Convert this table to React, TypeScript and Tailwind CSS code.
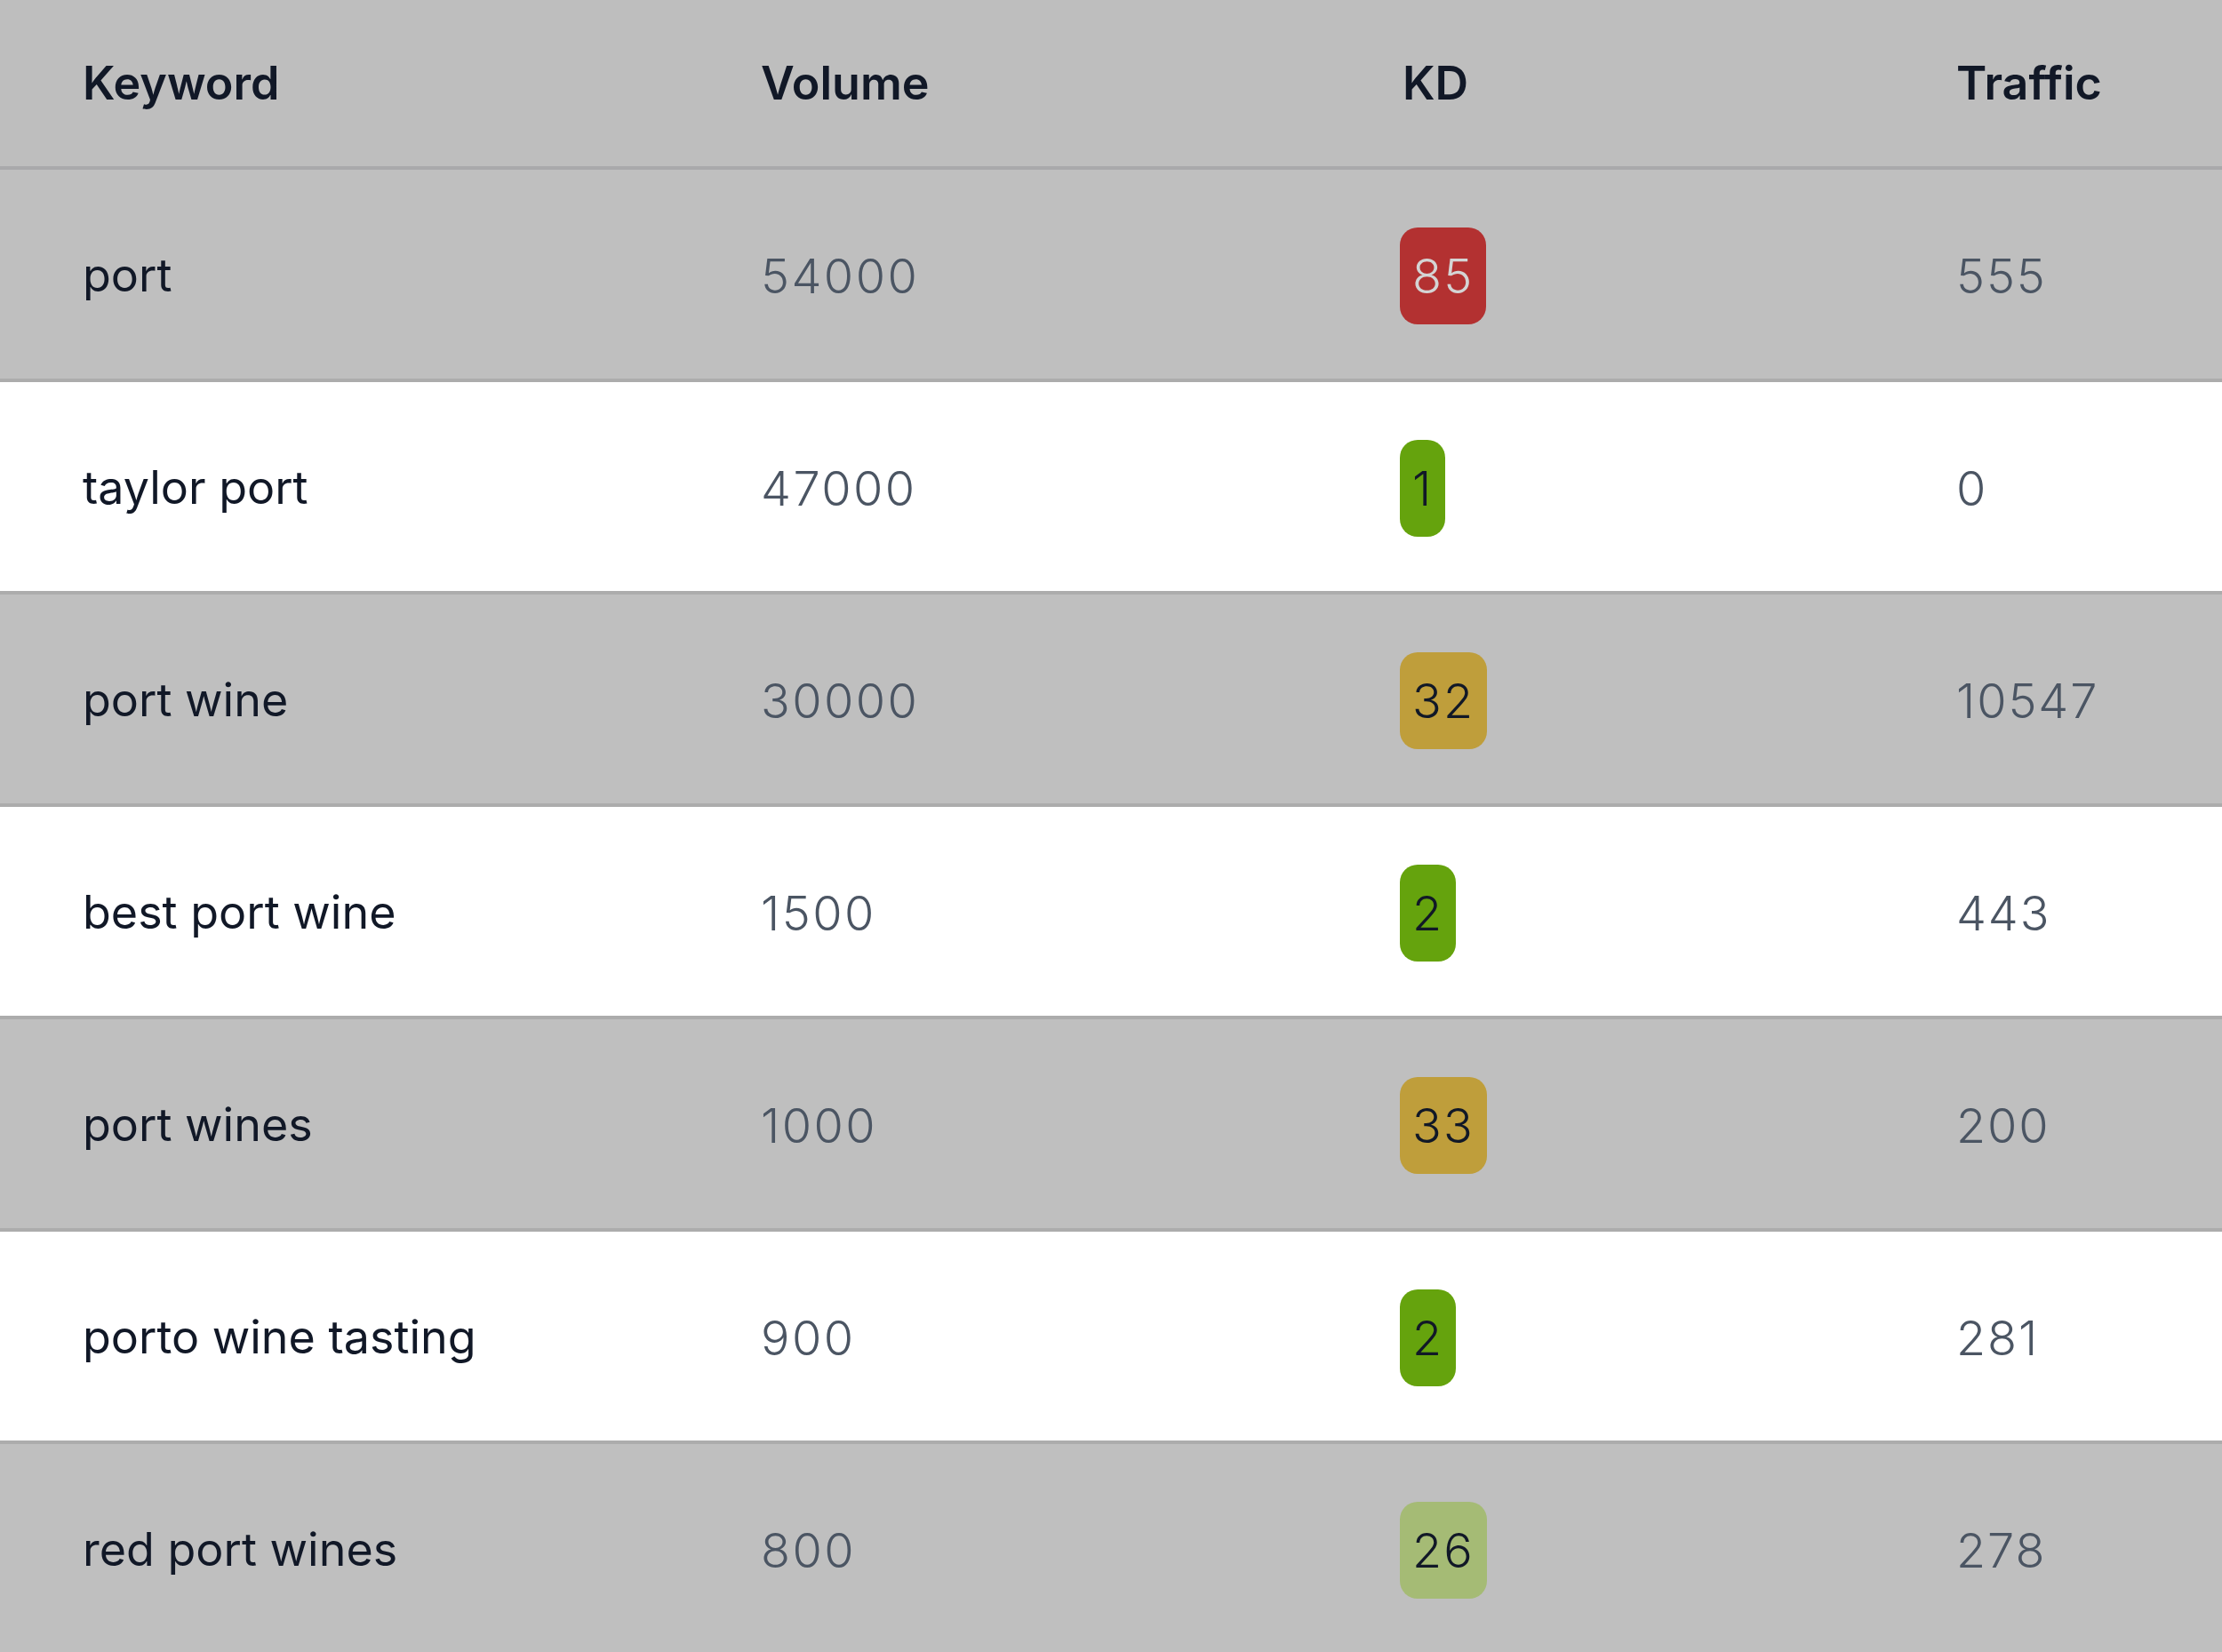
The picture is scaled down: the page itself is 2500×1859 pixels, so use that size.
const rows = [
  { kw: "port", vol: "54000", kd: "85", traffic: "555", badge: "bg-[#b33131] text-[#d4d4d4]" },
  { kw: "taylor port", vol: "47000", kd: "1", traffic: "0", badge: "bg-[#65a30d] text-[#111827]" },
  { kw: "port wine", vol: "30000", kd: "32", traffic: "10547", badge: "bg-[#bf9e3b] text-[#111827]" },
  { kw: "best port wine", vol: "1500", kd: "2", traffic: "443", badge: "bg-[#65a30d] text-[#111827]" },
  { kw: "port wines", vol: "1000", kd: "33", traffic: "200", badge: "bg-[#bf9e3b] text-[#111827]" },
  { kw: "porto wine tasting", vol: "900", kd: "2", traffic: "281", badge: "bg-[#65a30d] text-[#111827]" },
  { kw: "red port wines", vol: "800", kd: "26", traffic: "278", badge: "bg-[#a5bb75] text-[#111827]" },
];

export default function App() {
  return (
    <div className="w-[2500px] h-[1859px] overflow-hidden bg-white font-['Inter',sans-serif]">
      <div className="grid grid-cols-[763px_722px_623px_1fr] items-center h-[191px] pl-[93px] bg-[#bebebe] border-b-4 border-[#a9a9ab] text-[52px] font-semibold text-[#111827]">
        <span>Keyword</span>
        <span>Volume</span>
        <span>KD</span>
        <span>Traffic</span>
      </div>
      {rows.map((r, i) => (
        <div
          key={r.kw}
          className={`grid grid-cols-[763px_722px_623px_1fr] items-center h-[239px] pl-[93px] pt-[3px] border-b-4 border-[#acacac] ${i % 2 === 0 ? "bg-[#bfbfbf]" : "bg-white"}`}
        >
          <span className="text-[52px] text-[#111827]">{r.kw}</span>
          <span className="text-[54px] font-light tracking-[0.045em] text-[#4b5563]">{r.vol}</span>
          <div className="-ml-[3px]">
            <span className={`inline-flex items-center justify-center h-[109px] min-w-[51px] px-[14px] rounded-[20px] text-[54px] font-light tracking-[0.04em] ${r.badge}`}>
              {r.kd}
            </span>
          </div>
          <span className="text-[54px] font-light tracking-[0.035em] text-[#4b5563]">{r.traffic}</span>
        </div>
      ))}
    </div>
  );
}
